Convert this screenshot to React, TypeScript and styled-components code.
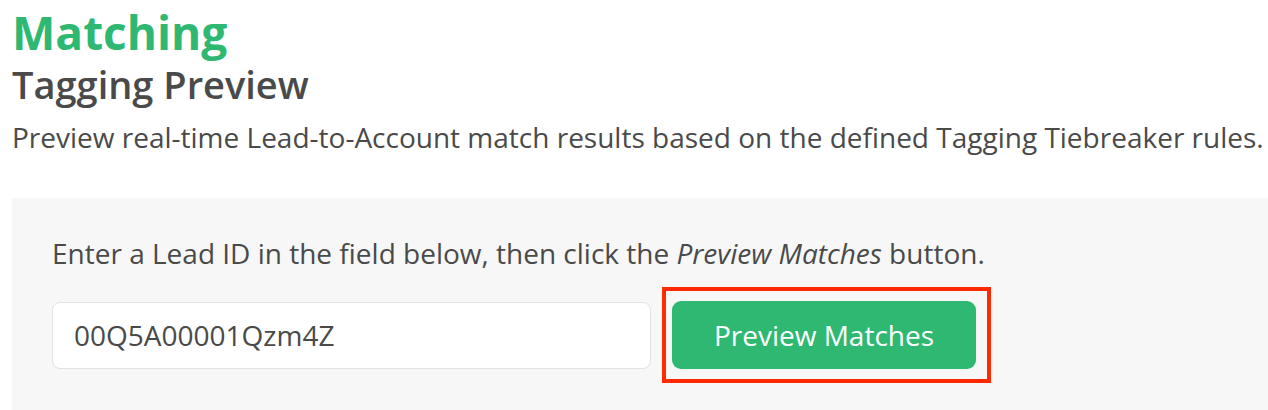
import React from "react";
import styled, { createGlobalStyle } from "styled-components";

const GlobalStyle = createGlobalStyle`
  html, body {
    margin: 0;
    padding: 0;
    background: #ffffff;
    font-family: "Open Sans", "Noto Sans", sans-serif;
    color: #4a4a4a;
    overflow: hidden;
  }
`;

const Page = styled.div`
  padding-left: 12px;
  width: 1256px;
`;

const Title = styled.h1`
  margin: 0;
  padding-top: 4px;
  font-size: 46px;
  line-height: 56px;
  font-weight: 700;
  color: #2eb872;
`;

const Subtitle = styled.h2`
  margin: 3px 0 0;
  font-size: 38px;
  line-height: 42px;
  font-weight: 600;
  color: #4a4a4a;
`;

const Description = styled.p`
  margin: 12px 0 0;
  font-size: 28px;
  line-height: 40px;
  font-weight: 400;
  color: #4a4a4a;
  white-space: nowrap;
`;

const Panel = styled.section`
  margin-top: 41px;
  background: #f7f7f7;
  padding: 35px 40px 60px;
`;

const Instructions = styled.p`
  margin: 0;
  font-size: 28px;
  line-height: 40px;
  color: #4a4a4a;
  white-space: nowrap;
`;

const Row = styled.div`
  margin-top: 28px;
  display: flex;
  align-items: center;
  gap: 21px;
`;

const Input = styled.input`
  box-sizing: border-box;
  width: 599px;
  height: 67px;
  border: 1.5px solid #e2e2e2;
  border-radius: 8px;
  background: #ffffff;
  padding: 0 21px;
  font-family: "Open Sans", "Noto Sans", sans-serif;
  font-size: 28px;
  color: #4a4a4a;
  outline: none;
`;

const ButtonWrap = styled.div`
  position: relative;
  display: flex;
`;

const Button = styled.button`
  box-sizing: border-box;
  width: 304px;
  height: 68px;
  border: none;
  border-radius: 9px;
  background: #2eb872;
  color: #ffffff;
  font-family: "Open Sans", "Noto Sans", sans-serif;
  font-size: 28px;
  padding: 0;
  cursor: pointer;
`;

const Highlight = styled.span`
  position: absolute;
  left: -10px;
  right: -15px;
  top: -14px;
  bottom: -14px;
  border: 4.5px solid #ff2a00;
  pointer-events: none;
`;

export default function App() {
  return (
    <>
      <GlobalStyle />
      <Page>
        <Title>Matching</Title>
        <Subtitle>Tagging Preview</Subtitle>
        <Description>
          Preview real-time Lead-to-Account match results based on the defined Tagging Tiebreaker rules.
        </Description>
        <Panel>
          <Instructions>
            Enter a Lead ID in the field below, then click the <em>Preview Matches</em> button.
          </Instructions>
          <Row>
            <Input defaultValue="00Q5A00001Qzm4Z" />
            <ButtonWrap>
              <Button>Preview Matches</Button>
              <Highlight />
            </ButtonWrap>
          </Row>
        </Panel>
      </Page>
    </>
  );
}
